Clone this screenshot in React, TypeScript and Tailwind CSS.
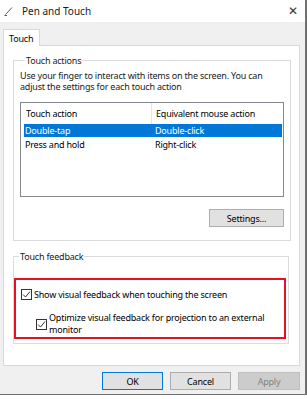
import { useState } from "react";

function CheckBox({ checked, onChange }: { checked: boolean; onChange: () => void }) {
  return (
    <button
      onClick={onChange}
      className="w-[11px] h-[11px] shrink-0 border border-[#333333] bg-white flex items-center justify-center"
    >
      {checked && (
        <svg width="9" height="9" viewBox="0 0 9 9">
          <path d="M1 4.5 L3.5 7 L8 1.5" fill="none" stroke="#333333" strokeWidth="1" />
        </svg>
      )}
    </button>
  );
}

export default function App() {
  const [showFeedback, setShowFeedback] = useState(true);
  const [optimize, setOptimize] = useState(true);
  const [selected, setSelected] = useState(0);

  const rows = [
    ["Double-tap", "Double-click"],
    ["Press and hold", "Right-click"],
  ];

  return (
    <div className="w-[307px] h-[399px] bg-white overflow-hidden text-[9px] tracking-[-0.2px] text-black font-['Noto_Sans',sans-serif] leading-[11px]">
      <div className="w-[307px] h-[395px] flex flex-col border-r-2 border-b border-[#707070]">
        {/* title bar */}
        <div className="h-[22px] bg-white flex items-center shrink-0">
          <svg width="10" height="10" viewBox="0 0 10 10" className="ml-[4px]">
            <path d="M1.5 8.5 L8 1.5" stroke="#5a5a5a" strokeWidth="1" fill="none" />
            <path d="M0.5 9.5 L3 9.5" stroke="#5a5a5a" strokeWidth="1" fill="none" />
          </svg>
          <span className="ml-[8px] text-[10px] tracking-normal text-[#1a1a1a]">Pen and Touch</span>
          <span className="ml-auto mr-[7px] text-[#333] text-[12px] leading-none">✕</span>
        </div>

        {/* body */}
        <div className="flex-1 bg-[#f0f0f0] flex flex-col">
          <div className="pt-[7px] pl-[3px] flex">
            <div className="relative z-10 h-[17px] w-[37px] bg-white border border-b-0 border-[#d9d9d9] flex items-center pl-[5px]">
              Touch
            </div>
          </div>

          <div className="ml-[3px] w-[297px] h-[321px] -mt-px bg-white border border-[#d9d9d9] pl-[9px] pr-[10px] pt-[9px] flex flex-col">
            <fieldset className="border border-[#dcdcdc] h-[186px] px-[6px] flex flex-col">
              <legend className="ml-[5px] px-[1px] text-[#1a1a1a]">Touch actions</legend>
              <p className="pt-[4px] text-[#1a1a1a]">
                Use your finger to interact with items on the screen. You can adjust the settings for each touch action
              </p>

              <div className="mt-[10px] w-[264px] h-[95px] border border-[#828790] flex flex-col">
                <div className="h-[21px] flex items-center shrink-0">
                  <div className="w-[130px] pl-[5px]">Touch action</div>
                  <div className="w-px h-full bg-[#e5e5e5]" />
                  <div className="pl-[4px]">Equivalent mouse action</div>
                </div>
                <div className="flex flex-col gap-[1px] pl-[3px] pr-px">
                  {rows.map((r, i) => (
                    <div
                      key={r[0]}
                      onClick={() => setSelected(i)}
                      className={`h-[13px] flex items-center ${selected === i ? "bg-[#0078d7] text-white" : ""}`}
                    >
                      <div className="w-[131px] pl-px">{r[0]}</div>
                      <div>{r[1]}</div>
                    </div>
                  ))}
                </div>
              </div>

              <div className="w-[264px] flex justify-end mt-[12px]">
                <button className="w-[75px] h-[18px] bg-[#e1e1e1] border border-[#adadad] flex items-center justify-center">
                  Settings...
                </button>
              </div>
            </fieldset>

            <fieldset className="mt-[10px] border border-[#dcdcdc] h-[93px] flex flex-col">
              <legend className="ml-[5px] px-[1px] text-[#1a1a1a]">Touch feedback</legend>
              <div className="mt-[16px] w-[272px] h-[61px] border-2 border-[#e81123] flex flex-col pl-[5px]">
                <div className="mt-[9px] flex items-center gap-[2px]">
                  <CheckBox checked={showFeedback} onChange={() => setShowFeedback(!showFeedback)} />
                  <span>Show visual feedback when touching the screen</span>
                </div>
                <div className="mt-[12px] ml-[15px] flex items-center gap-[2px]">
                  <CheckBox checked={optimize} onChange={() => setOptimize(!optimize)} />
                  <span className="leading-[12px]">
                    Optimize visual feedback for projection to an external
                    <br />
                    monitor
                  </span>
                </div>
              </div>
            </fieldset>
          </div>

          <div className="mt-[6px] flex justify-end gap-[7px] pr-[5px]">
            <button className="w-[61px] h-[18px] bg-[#e1e1e1] border border-[#0078d7] flex items-center justify-center">
              OK
            </button>
            <button className="w-[61px] h-[18px] bg-[#e1e1e1] border border-[#adadad] flex items-center justify-center">
              Cancel
            </button>
            <button className="w-[62px] h-[18px] bg-[#cccccc] border border-[#bfbfbf] text-[#838383] flex items-center justify-center">
              Apply
            </button>
          </div>
        </div>
      </div>
    </div>
  );
}
